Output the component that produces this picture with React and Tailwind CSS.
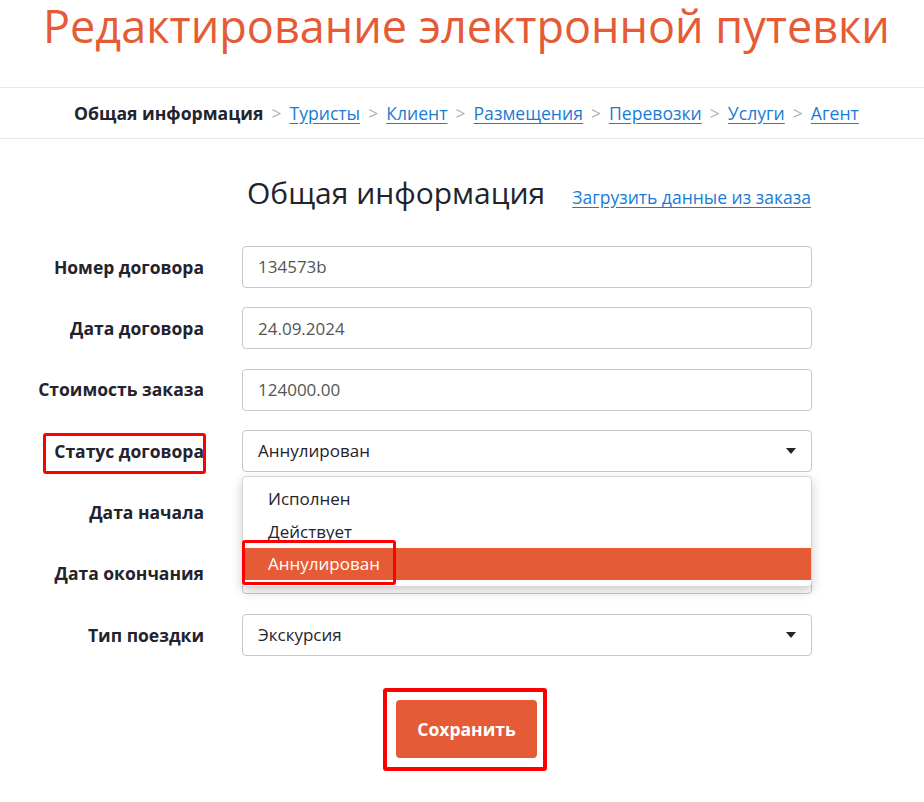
const crumbs = ['Туристы', 'Клиент', 'Размещения', 'Перевозки', 'Услуги', 'Агент'];

const fields = [
  { label: 'Номер договора', value: '134573b' },
  { label: 'Дата договора', value: '24.09.2024' },
  { label: 'Стоимость заказа', value: '124000.00' },
  { label: 'Статус договора', value: 'Аннулирован', select: true, open: true },
  { label: 'Дата начала', value: '' },
  { label: 'Дата окончания', value: '' },
  { label: 'Тип поездки', value: 'Экскурсия', select: true },
];

const statusOptions = ['Исполнен', 'Действует', 'Аннулирован'];

function Caret() {
  return (
    <svg width="10" height="6" viewBox="0 0 10 6" className="absolute right-[16px] top-1/2 -translate-y-1/2">
      <path d="M0 0h10L5 6z" fill="#23232d" />
    </svg>
  );
}

function StatusDropdown() {
  return (
    <div className="absolute left-0 top-[46px] z-10 w-full rounded-[4px] border border-[#d6d6d6] bg-white pb-[6px] pt-[5px] shadow-[0_4px_12px_rgba(0,0,0,0.2)]">
      {statusOptions.map((option) => (
        <div
          key={option}
          className={`flex items-center pl-[25px] text-[17px] ${
            option === 'Аннулирован' ? 'h-[32px] bg-[#e55b35] text-white' : 'h-[33px] text-[#23232d]'
          }`}
        >
          {option}
        </div>
      ))}
      <div className="absolute left-[-1px] top-[63px] h-[45px] w-[154px] rounded-[3px] border-[3px] border-[#ff0000]" />
    </div>
  );
}

function FieldRow({ field }) {
  return (
    <div className="relative flex h-[42px] items-center">
      <div className="w-[204px] text-right text-[17.5px] font-bold text-[#23232d]">{field.label}</div>
      <div className="relative ml-[38px] h-[42px] w-[570px]">
        <div
          className={`flex h-full items-center rounded-[4px] border border-[#c8c8c8] bg-white px-[15px] text-[17px] ${
            field.select ? 'text-[#23232d]' : 'text-[#555555]'
          }`}
        >
          {field.value}
        </div>
        {field.select && <Caret />}
        {field.open && <StatusDropdown />}
      </div>
      {field.open && (
        <div className="absolute left-[43px] top-[3px] h-[41px] w-[163px] rounded-[3px] border-[3px] border-[#ff0000]" />
      )}
    </div>
  );
}

export default function App() {
  return (
    <div className="min-h-[802px] w-[924px] bg-white font-['Open_Sans',sans-serif]">
      <h1 className="pl-[9px] text-center text-[45px] leading-[52px] text-[#e55b35]">
        Редактирование электронной путевки
      </h1>

      <nav className="mt-[35px] flex h-[52px] items-center justify-center border-y border-[#e6e6e6] pl-[9px] text-[17.6px]">
        <span className="font-bold text-[#23232d]">Общая информация</span>
        {crumbs.map((crumb) => (
          <span key={crumb} className="flex items-center">
            <span className="mx-[8px] text-[#b0b0b0]">&gt;</span>
            <a href="#" className="text-[#1a7bd4] underline underline-offset-[3px]">
              {crumb}
            </a>
          </span>
        ))}
      </nav>

      <div className="mt-[34px] flex h-[40px] items-baseline pl-[247px]">
        <h2 className="text-[30px] leading-[40px] text-[#23232d]">Общая информация</h2>
        <a href="#" className="ml-[27px] text-[17.5px] text-[#1a7bd4] underline underline-offset-[3px]">
          Загрузить данные из заказа
        </a>
      </div>

      <div className="mt-[33px] flex flex-col gap-[19.3px]">
        {fields.map((field) => (
          <FieldRow key={field.label} field={field} />
        ))}
      </div>

      <div className="mt-[44px] flex justify-center pl-[9px]">
        <div className="relative">
          <button
            type="button"
            className="h-[58px] w-[141px] rounded-[4px] bg-[#e55b35] text-[17.5px] font-bold text-white"
          >
            Сохранить
          </button>
          <div className="absolute left-[-13px] top-[-12px] h-[83px] w-[164px] rounded-[3px] border-[4px] border-[#ff0000]" />
        </div>
      </div>
    </div>
  );
}
